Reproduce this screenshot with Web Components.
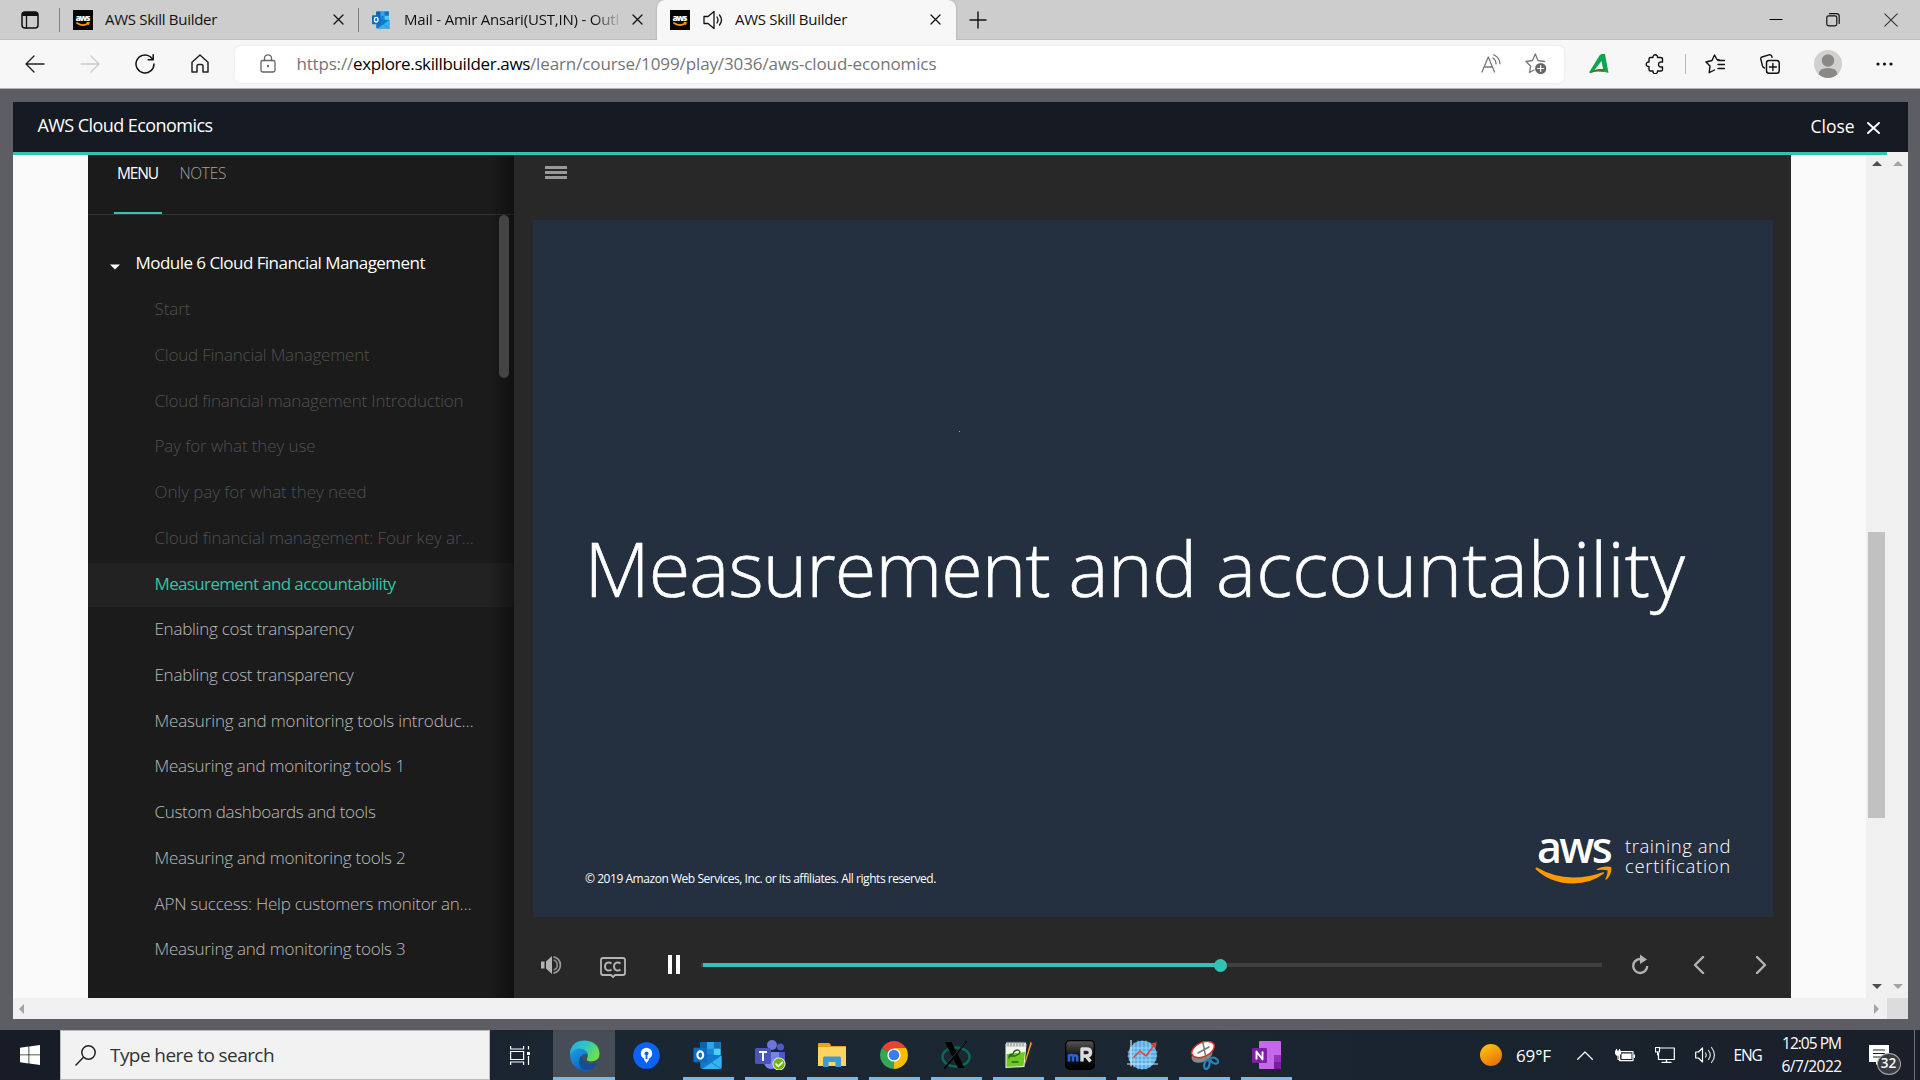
<!DOCTYPE html>
<html lang="en">
<head>
<meta charset="utf-8">
<title>AWS Skill Builder</title>
<style>
html,body{margin:0;padding:0;overflow:hidden;font-family:"Open Sans","Noto Sans",sans-serif}
</style>
</head>
<body>
<desktop-screen></desktop-screen>
<script>
const pending=[];
const make=(name,html)=>customElements.define(name,class extends HTMLElement{
  constructor(){super();this.attachShadow({mode:'open'}).innerHTML=html;}
});

/* Text label whose tracking is tuned to a given width */
customElements.define('fit-text',class extends HTMLElement{
  constructor(){super();this.attachShadow({mode:'open'}).innerHTML='<style>:host{display:inline-block;white-space:pre;flex:none}</style><slot></slot>';}
  connectedCallback(){pending.push(this);}
  fit(){
    const w=+this.getAttribute('w');if(!w)return;
    this.style.letterSpacing='0.001px';
    const n=[...this.textContent].length;
    const d=(w-this.getBoundingClientRect().width)/n;
    this.style.letterSpacing=d.toFixed(3)+'px';
  }
});

const s=(w,h,body,vb)=>`<svg width="${w}" height="${h}" viewBox="${vb||`0 0 ${w} ${h}`}" fill="none" stroke-linecap="round" stroke-linejoin="round">${body}</svg>`;
const outlook=`<path d="M8 1h19a1 1 0 0 1 1 1v13H7V2a1 1 0 0 1 1-1z" fill="#1b87d6"/><path d="M7 1h7v7H7z" fill="#0f62ae"/><path d="M14 1h14v7H14z" fill="#31a5ea"/><path d="M21 1h7v7h-7z" fill="#1d6fb4"/><path d="M21 8h7v7h-7z" fill="#4fd0f8"/><path d="M7 13l22 2v12a2 2 0 0 1-2 2H9a2 2 0 0 1-2-2z" fill="#1278cc"/><path d="M29 15v12a2 2 0 0 1-2 2H9z" fill="#34b4ee"/><path d="M12 18l17 11" stroke="#1a7ecf"/><rect x="0" y="7" width="14" height="15" rx="1" fill="#0d6cc4"/><ellipse cx="7" cy="14.500" rx="3" ry="3.800" stroke="#fff" stroke-width="2.200"/>`;
const ICONS={
 panel:s(18,18,'<rect x="1" y="1" width="16" height="16" rx="3" stroke="#111" stroke-width="1.500"/><path d="M1 5V3q0-2 2-2h12q2 0 2 2v2z" fill="#111"/><path d="M5.500 5v12" stroke="#111" stroke-width="1.300"/>'),
 awsfav:s(20,20,'<rect width="20" height="20" fill="#050505"/><text x="10" y="10.500" text-anchor="middle" font-family="Open Sans" font-weight="800" font-size="8.500" fill="#fff" textLength="15">aws</text><path d="M4 13q6 4 11 .5" stroke="#f90" stroke-width="1.700"/><path d="M14 12.500h2.300l-.6 2" stroke="#f90"/>'),
 outlook20:s(20,18,outlook,'0 0 30 30'),
 outlook:s(30,29,outlook,'0 0 30 30'),
 x11:s(11,11,'<path d="M1 1l9 9M10 1l-9 9" stroke="#111" stroke-width="1.300"/>'),
 sound:s(20,20,'<path d="M1 6.500h4L11 1.500v17L5 13.500H1z" stroke="#111" stroke-width="1.300"/><path d="M14 7q2 3 0 6M16.500 5q4 5 0 10" stroke="#111" stroke-width="1.300"/>'),
 plus:s(18,18,'<path d="M9 1v16M1 9h16" stroke="#111" stroke-width="1.400"/>'),
 min:s(14,14,'<path d="M.5 6.500h13" stroke="#000" stroke-linecap="butt"/>'),
 restore:s(14,14,'<rect x=".8" y="2.800" width="10" height="10" rx="1.800" stroke="#111" stroke-width="1.200"/><path d="M3.500.7h7q2.700 0 2.700 2.700v7" stroke="#111" stroke-width="1.200"/>'),
 wclose:s(14,14,'<path d="M.8.8l12.400 12.400M13.200.8L.8 13.200" stroke="#333" stroke-width="1.100"/>'),
 back:s(20,18,'<path d="M19 9H1M9 1L1 9l8 8" stroke="#222" stroke-width="1.400"/>'),
 fwd:s(20,18,'<path d="M1 9h18M11 1l8 8-8 8" stroke="#ccc" stroke-width="1.400"/>'),
 refresh:s(20,20,'<path d="M19 10a9 9 0 1 1-4-7.500L18 5.500M18.200 .8v5h-5" stroke="#111" stroke-width="1.500"/>'),
 home:s(18,19,'<path d="M1 8.200L9 1l8 7.200V18h-5v-6q0-1.500-1.500-1.500h-3Q6 10.500 6 12v6H1z" stroke="#222" stroke-width="1.500"/>'),
 lock:s(16,19,'<rect x="1" y="6.500" width="14" height="11.500" rx="1.800" stroke="#666" stroke-width="1.300"/><path d="M4.500 6.500V4.300a3.500 3.500 0 0 1 7 0v2.200" stroke="#666" stroke-width="1.300"/><circle cx="8" cy="12" r="1.200" fill="#666"/>'),
 read:s(20,19,'<path d="M1 18L7.300 3 13.500 18M3.300 13h8" stroke="#777" stroke-width="1.300"/><path d="M12 4q3 2 3 6M12.500.8q6 2.500 6.500 9" stroke="#777" stroke-width="1.200"/>'),
 star:s(22,21,'<path d="M19.500 8.500L13 7.500 10.300 1 7.500 7.500 1 8.500l4.700 4.700L4.500 19.500l4.500-2.500" stroke="#777" stroke-width="1.300"/><circle cx="15.700" cy="15.500" r="5.600" fill="#666"/><path d="M15.700 12.500v6M12.700 15.500h6" stroke="#fff" stroke-width="1.200"/>'),
 ga:s(20,21,'<path d="M13 1h3l3.500 19-5-1.500L12.500 8 4 19q-2 1.500-4 .5L10.500 2.500Q11.500 1 13 1z" fill="#11a44f"/><path d="M1 20q3-3.500 9-4l5 0v3q-8-1.500-14 1z" fill="#3f7d1e"/>'),
 puzzle:s(19,20,'<path d="M4 5q0-1.500 1.500-1.500H8a2.300 2.300 0 1 1 4.500 0H15.500Q17.500 3.500 17.500 5v3q-4-.5-4 2.500t4 2.500v2.500q0 1.500-1.500 1.500h-3.500a2.300 2.300 0 1 1-4.500 0H5.500Q4 17 4 15.500v-3a2.300 2.300 0 1 1 0-4.500z" stroke="#111" stroke-width="1.400"/>'),
 favs:s(20,20,'<path d="M15 6.300l-3-.8L9.500 1 7 6.500 1 8l4 4-.8 6.700L9.500 16M13 6.500h6.500M13 10.500h6.500M13 14.500h6.500" stroke="#111" stroke-width="1.400"/>'),
 coll:s(20,20,'<rect x="6.500" y="6.500" width="12.700" height="12.700" rx="2.500" stroke="#111" stroke-width="1.500"/><path d="M12.900 9.500v7M9.400 13h7M4.500 14Q3 13.500 2.500 12L.8 5Q.5 3.500 2 3l7-2.200q2-.3 2.700 1.200l.4 1.400" stroke="#111" stroke-width="1.400"/>'),
 avatar:s(28,28,'<circle cx="14" cy="14" r="14" fill="#d2d0ce"/><circle cx="14" cy="10.500" r="6.200" fill="#8a8886"/><path d="M4.500 24.300Q5.500 18 14 18t9.500 6.300Q19.500 28 14 28t-9.500-3.700z" fill="#8a8886"/>'),
 dots:s(17,4,'<circle cx="2" cy="2" r="1.600" fill="#111"/><circle cx="8.500" cy="2" r="1.600" fill="#111"/><circle cx="15" cy="2" r="1.600" fill="#111"/>'),
 closew:s(13,12,'<path d="M1 1l11 10M12 1L1 11" stroke="#fff" stroke-width="1.900"/>'),
 burger:s(22,13,'<path d="M0 1.500h22M0 6.500h22M0 11.500h22" stroke="#999" stroke-width="3" stroke-linecap="butt"/>'),
 tri:s(10,6,'<path d="M0 .5h10L5 5.500z" fill="#fff"/>'),
 up:s(10,5,'<path d="M5 0l5 5H0z" fill="#505050"/>'), up2:s(10,5,'<path d="M5 0l5 5H0z" fill="#a3a3a3"/>'),
 dn:s(10,5,'<path d="M5 5l5-5H0z" fill="#505050"/>'), dn2:s(10,5,'<path d="M5 5l5-5H0z" fill="#a3a3a3"/>'),
 lt:s(5,10,'<path d="M0 5l5-5v10z" fill="#a3a3a3"/>'), rt:s(5,10,'<path d="M5 5L0 0v10z" fill="#a3a3a3"/>'),
 vol:s(21,18,'<path d="M0 5.500h3.500v7H0zM5 5.500L11 0v18l-6-5.500z" fill="#b4b4b4"/><path d="M12.500.9a8.200 8.200 0 0 1 0 16.200" stroke="#999" stroke-width="1.700" stroke-linecap="butt"/><path d="M12.500 4a5.200 5.200 0 0 1 0 10" stroke="#888" stroke-width="1.700" stroke-linecap="butt"/>'),
 cc:s(26,21,'<path d="M3 1h20q2 0 2 2v13q0 2-2 2h-8l-2 2-2-2H3q-2 0-2-2V3q0-2 2-2z" stroke="#b4b4b4" stroke-width="1.800"/><path d="M11.500 6.500Q9.700 5 7.500 5.600 5 6.500 5 9.500t2.500 3.900q2.200.6 4-.9M20.500 6.500Q18.700 5 16.500 5.600 14 6.500 14 9.500t2.500 3.900q2.200.6 4-.9" stroke="#b4b4b4" stroke-width="1.900" stroke-linecap="butt"/>'),
 pause:s(12,19,'<path d="M0 0h4v19H0zM8 0h4v19H8z" fill="#fff"/>'),
 replay:s(17,21,'<path d="M9.500 5H8a7 7 0 1 0 7.200 7" stroke="#b4b4b4" stroke-width="2.300" stroke-linecap="butt"/><path d="M8 .5l7 5-7 4.500z" fill="#b4b4b4"/>'),
 prev:s(12,18,'<path d="M10 1L2 9l8 8" stroke="#b4b4b4" stroke-width="2.400"/>'),
 next:s(12,18,'<path d="M2 1l8 8-8 8" stroke="#b4b4b4" stroke-width="2.400"/>'),
 smile:s(78,19,'<path d="M.5 2.200Q1 1 2.500 1.800 19 11.500 38 11.500 53 11.500 67 6.500q3.500-1 1.500 1.300Q56 17.500 38 17.500 16 17.500 1 3.500.2 3 .5 2.200z" fill="#f90"/><path d="M62 3q5-3.500 13-2.300 1.500.2 1.500 1.800Q76 9.500 71.500 13.500q-1.500 1-.8-.8 2-5 2-8.200-3.200-1-9.700-.5-2.200.3-1-1z" fill="#f90"/>'),
 win:s(20,20,'<path d="M0 2.800L8.500 1.600v7.900H0zM9.300 1.500L20 0v9.500H9.300zM0 10.300h8.500v8.100L0 17.200zM9.300 10.300H20V20L9.300 18.500z" fill="#fff"/>'),
 search:s(21,21,'<circle cx="13.500" cy="7.500" r="6.700" stroke="#222" stroke-width="1.500"/><path d="M8.500 12.300L1 20" stroke="#222" stroke-width="1.500"/>'),
 task:s(21,19,'<path d="M.6 0v3h13V0M.6 19v-3h13v3M.6 5.500h13v8H.6zM18.500 0v3.500M18.500 10v9" stroke="#fff" stroke-width="1.200" stroke-linecap="butt" stroke-linejoin="miter"/><path d="M17 6h3v3h-3z" fill="#fff"/>'),
 edge:s(31,31,'<defs><linearGradient id="eg" x1="0" y1="0" x2="1" y2=".5"><stop offset="0" stop-color="#25a7e8"/><stop offset=".5" stop-color="#2fc4c9"/><stop offset="1" stop-color="#6be04a"/></linearGradient><linearGradient id="eb" x1="0" y1="0" x2=".5" y2="1"><stop offset="0" stop-color="#1da0df"/><stop offset="1" stop-color="#0a64c4"/></linearGradient></defs><path d="M1 15Q1 1 15.500 .5 29 1 30.500 13q.5 8-8.500 8.500-5 0-4-3 2.500-4-2-7.500Q8 7 1 15z" fill="url(#eg)"/><path d="M1 15Q4 8 11 8.500q7 .5 8 6.500-5-3-7.500 3Q10 27 19 29q2 .5 4 0Q17 33 9 29 1 24 1 15z" fill="url(#eb)"/><path d="M12 15.500Q7 25 14.500 29.500q8 2.500 13.500-5.500.5-1.500-1-.8-6 2-11-1.200Q12.500 19 12 15.500z" fill="#124f94"/>'),
 pin:s(27,27,'<circle cx="13.500" cy="13.500" r="13.300" fill="#0a63f4"/><circle cx="13.500" cy="11.500" r="5.700" fill="#fff"/><circle cx="13.500" cy="11.500" r="2" fill="#0a63f4"/><path d="M11.200 13h4.600v5l-2.300 3-2.300-3z" fill="#fff"/><path d="M12.600 12h1.800v5h-1.800z" fill="#0a63f4"/>'),
 teams:s(31,30,'<circle cx="17" cy="5" r="5" fill="#6d75dc"/><circle cx="25.500" cy="7" r="3.500" fill="#5059c9"/><path d="M21 12h9v10q-1 6-7 5z" fill="#5059c9"/><path d="M9 12h15v11q-1 6-8 6-6-.5-7-6z" fill="#7b83eb"/><rect y="8" width="16" height="16" rx="1.500" fill="#4b53bc"/><path d="M4 12h8M8 12v9" stroke="#fff" stroke-width="2" stroke-linecap="butt"/><circle cx="24" cy="24" r="6.500" fill="#fff"/><circle cx="24" cy="24" r="5.700" fill="#6bb700"/><path d="M21 24l2.300 2.300 4-4" stroke="#fff" stroke-width="1.700"/>'),
 folder:s(28,25,'<path d="M0 1q0-1 1-1h10q1.500 0 2 3H28v19q0 1-1 1H1q-1 0-1-1z" fill="#e8a41c"/><path d="M0 4h27q1 0 1 1v18H0z" fill="#fcd462"/><path d="M5 24v-9q0-1.500 1.500-1.500h15Q23 13.500 23 15v9h-5.500v-4.500q0-.5-.8-.5h-5.500q-.7 0-.7.500V24z" fill="#3d9ad6"/>'),
 chrome:s(28,28,'<path d="M14 14L1.900 7A14 14 0 0 1 26.100 7z" fill="#ea4335"/><path d="M14 14L26.100 7A14 14 0 0 1 14 28z" fill="#fbbc05"/><path d="M14 14L14 28A14 14 0 0 1 1.900 7z" fill="#34a853"/><path d="M14 7h12.100L19 18l-5 10 4-12z" fill="#fbbc05"/><circle cx="14" cy="14" r="6.600" fill="#fff"/><circle cx="14" cy="14" r="5.300" fill="#3b7ded"/>'),
 xq:s(32,28,'<ellipse cx="16" cy="16" rx="13.500" ry="9.500" stroke="#0c6b4e" stroke-width="2.500"/><path d="M5 1h6.500l13 26H18z" fill="#000"/><path d="M26 1L5 27" stroke="#000" stroke-width="1.800"/><path d="M25 2L9 20" stroke="#4a5960" stroke-width=".6"/>'),
 note:s(29,28,'<path d="M1.500 3h21l-2 23-19 1z" fill="#f1f5ea"/><path d="M2.500 13l18.500-2-1.500 14L2.500 26z" fill="#6fca20"/><path d="M2 6V1.500h20V6" fill="#ddd"/><path d="M4 1v4M7 1v4M10 1v4M13 1v4M16 1v4M19 1v4" stroke="#888"/><path d="M5 17q0-4 4-4 1-4 5-4 3 1 1 4l-4 2H5M8 21h6" stroke="#296219" stroke-width="1.300"/><path d="M28 2l-6.500 20-1 3 .2-4L26.500 1z" fill="#f0a317"/><path d="M26.500 1l1.500 1" stroke="#c33"/>'),
 mr:s(30,30,'<defs><linearGradient id="mg" x2="0" y2="1"><stop stop-color="#555"/><stop offset=".5" stop-color="#161616"/><stop offset="1" stop-color="#000"/></linearGradient></defs><rect x=".7" y=".7" width="28.600" height="28.600" rx="4" fill="url(#mg)" stroke="#000" stroke-width="1.300"/><path d="M4 21.500v-7M4 15.500q3.500-1.500 4 1v5M8 16.500q3.500-2.500 4.200.3v4.700" stroke="#2465df" stroke-width="2.600" stroke-linecap="butt"/><path d="M17 21.500V9h4.500q4 0 4 3.500t-4 3.500H17M21 16l4.500 5.500" stroke="#ddd" stroke-width="3.400" stroke-linecap="butt"/>'),
 graph:s(31,30,'<circle cx="15.500" cy="15" r="14.300" fill="#58aee5"/><path d="M3 8h25M1 12h29M1 16h29M2 20h27M7 3v24M11 1v28M15 1v28M19 1v28M23 3v24" stroke="#b9e4fa" stroke-width=".7"/><path d="M4 0v26M0 24h31" stroke="#d7e9f3" stroke-width="1.200"/><path d="M7 17l6-6 6 5 9-12M25 4l4-1-1 4" stroke="#e04038" stroke-width="1.500"/>'),
 snip:s(29,29,'<ellipse cx="12" cy="14" rx="11" ry="7" transform="rotate(-25 12 14)" fill="#888"/><ellipse cx="13" cy="8.500" rx="12" ry="7" transform="rotate(-25 13 8.500)" fill="#fff" stroke="#d73026" stroke-width="1.500"/><path d="M13 2l3 15M19 6L8 12" stroke="#777" stroke-width="1.500"/><ellipse cx="17" cy="23.500" rx="2.500" ry="4.500" transform="rotate(15 17 23)" stroke="#2583bd" stroke-width="2.200"/><ellipse cx="24" cy="19.500" rx="4.200" ry="2.600" transform="rotate(30 24 20)" stroke="#2583bd" stroke-width="2.200"/>'),
 onenote:s(29,28,'<path d="M8 0h20q1 0 1 1v26q0 1-1 1H8q-1 0-1-1V1q0-1 1-1z" fill="#c568ea"/><path d="M22 14h7v7h-7z" fill="#9333be"/><path d="M22 21h7v6q0 1-1 1h-6z" fill="#761fa1"/><rect y="7" width="15" height="15" rx="1" fill="#7c20a5"/><path d="M4.500 18.500v-8l6 8v-8" stroke="#fff" stroke-width="1.900" stroke-linecap="butt"/>'),
 sun:s(22,22,'<defs><linearGradient id="sg" x1=".2" x2=".8" y2="1"><stop stop-color="#fdc708"/><stop offset="1" stop-color="#e9690c"/></linearGradient></defs><circle cx="11" cy="11" r="11" fill="url(#sg)"/>'),
 chev:s(16,9,'<path d="M.7 8.300L8 1l7.300 7.300" stroke="#fff" stroke-width="1.300"/>'),
 bat:s(20,13,'<rect x="4.500" y="2.600" width="13.500" height="9" stroke="#fff" stroke-width="1.200"/><path d="M6.500 4.500h10v5.500h-10zM18.500 5.500H20v3.500h-1.500z" fill="#fff"/><path d="M0 1.500h6v3q-1 2.500-3 2.500T0 4.500z" fill="#fff"/><path d="M1.500 0v2M4.500 0v2M3 7v3.500h2" stroke="#fff" stroke-width="1.100"/>'),
 net:s(20,16,'<path d="M5 1h14.300v11.500H3.500V6M11.500 12.500V15M7 15.400h9" stroke="#fff" stroke-width="1.200"/><path d="M.5.500h4v4.500h-4z" stroke="#fff" stroke-width="1.200"/><path d="M2.500 5v3" stroke="#fff"/>'),
 spk:s(21,18,'<path d="M.7 6h2.800l4-4v14l-4-4H.7z" stroke="#fff" stroke-width="1.200"/><path d="M10.500 7q1.500 2 0 4M13.500 4.500q3.500 4.500 0 9M16.500 1.500q6 7.500 0 15" stroke="#ddd" stroke-width="1.200"/>'),
 notif:s(20,20,'<path d="M0 0h20v17H10l-3 3v-3H0z" fill="#fff"/><path d="M4 5h12M4 8.500h12M4 12h8" stroke="#19212b" stroke-width="1.200" stroke-linecap="butt"/>')
};
customElements.define('ui-icon',class extends HTMLElement{
  constructor(){super();this.attachShadow({mode:'open'});}
  connectedCallback(){this.shadowRoot.innerHTML='<style>:host{display:block;flex:none}svg{display:block}</style>'+(ICONS[this.getAttribute('name')]||'');}
});
const I=(n,ml=0,extra='')=>`<ui-icon name="${n}" style="margin-left:${ml}px;${extra}"></ui-icon>`;
const T=(t,w,ml=0,extra='')=>`<fit-text w="${w}" style="margin-left:${ml}px;${extra}">${t}</fit-text>`;

make('browser-tabs',`<style>
:host{display:flex;height:40px;background:#cdcdcd;font-size:15px;color:#111;box-sizing:border-box}
.t,.w{display:flex;align-items:center;height:40px;flex:none;box-sizing:border-box}
.t{border-bottom:1px solid #bbb}
.sep{width:1px;height:24px;background:#808080}
.fade{width:215px;overflow:hidden;-webkit-mask:linear-gradient(90deg,#000 88%,#0002);mask:linear-gradient(90deg,#000 88%,#0002)}
.active{width:299px;background:#f7f7f7;border-bottom-color:#f7f7f7;border-radius:8px 8px 0 0;box-shadow:0 0 2px #999}
.w{flex:1;border-bottom:1px solid #bbb}
fit-text{padding-bottom:1px}
</style>
<div class="t" style="width:59px">${I('panel',21)}</div>
<div class="t" style="width:299px"><i class="sep"></i>${I('awsfav',13)}${T('AWS Skill Builder',112,12)}${I('x11',116)}</div>
<div class="t" style="width:299px"><i class="sep"></i>${I('outlook20',12)}<div class="fade" style="margin-left:13px">${T('Mail - Amir Ansari(UST,IN) - Outl',215)}</div>${I('x11',12.500)}</div>
<div class="t active">${I('awsfav',13)}${I('sound',13)}${T('AWS Skill Builder',112,12)}${I('x11',83)}</div>
<div class="w">${I('plus',13)}${I('min',782)}${I('restore',43)}${I('wclose',44)}</div>`);

make('browser-toolbar',`<style>
:host{display:flex;align-items:center;height:49px;background:#f7f7f7;border-bottom:1px solid #b4b4b4;box-sizing:border-box;font-size:17px}
.url{display:flex;align-items:center;width:1329px;height:37px;background:#fff;border-radius:6px;margin-left:26px;color:#757575;box-shadow:0 0 3px #e2e2e2;flex:none}
.url fit-text{padding-bottom:2px}
ui-icon{margin-top:-1px}
.s{width:1.500px;height:20px;background:#b8b8b8;margin-left:21px;flex:none}
</style>
${I('back',25)}${I('fwd',35)}${I('refresh',35)}${I('home',36)}
<div class="url">${I('lock',25)}${T('https://',56.500,20.500)}${T('explore.skillbuilder.aws',177,0,'color:#000')}${T('/learn/course/1099/play/3036/aws-cloud-economics',406.500)}${I('read',545)}${I('star',24)}</div>
${I('ga',25)}${I('puzzle',35.500)}<i class="s"></i>${I('favs',18.500)}${I('coll',35)}${I('avatar',34)}${I('dots',34.500)}`);

make('course-header',`<style>
:host{display:flex;align-items:center;height:50px;background:#161a22;color:#fff;font-size:18px;box-sizing:border-box;padding:0 28.500px 4px 24.500px;flex:none}
.sp{flex:1}
</style><slot></slot><span class="sp"></span>${T('Close',44,0,'padding-top:1px;font-size:17.500px')}${I('closew',12,'margin-top:5px')}`);

customElements.define('menu-item',class extends HTMLElement{
  constructor(){super();this.attachShadow({mode:'open'}).innerHTML=`<style>
  :host{display:flex;align-items:center;height:45.740px;padding:0 0 4.600px 66.500px;box-sizing:border-box;color:#bcbcbc;font-weight:350}
  :host([seen]){color:#505050}
  :host([on]){padding-bottom:3.600px;color:#33c3a5;background:linear-gradient(#222,#222) 0 50%/100% 44px no-repeat;font-weight:400}
  </style><slot></slot>`;}
});
const items=[['Start',36,1],['Cloud Financial Management',215,1],['Cloud financial management Introduction',309,1],['Pay for what they use',161,1],['Only pay for what they need',212,1],['Cloud financial management: Four key ar…',319,1],['Measurement and accountability',241,2],['Enabling cost transparency',199],['Enabling cost transparency',199],['Measuring and monitoring tools introduc…',319],['Measuring and monitoring tools 1',250.500],['Custom dashboards and tools',221],['Measuring and monitoring tools 2',251],['APN success: Help customers monitor an…',317],['Measuring and monitoring tools 3',251]];
make('course-menu',`<style>
:host{display:flex;flex-direction:column;width:426px;background:#1b1b1b;position:relative;font-size:17px;flex:none;overflow:hidden}
.tabs{display:flex;height:60px;border-bottom:1px solid #353535;box-sizing:border-box;padding-left:26px;font-size:15.500px;color:#a2a2a2;font-weight:350;flex:none}
.tabs div{box-sizing:border-box;height:59px;line-height:36px}
.on{width:48px;color:#fff;font-weight:400;border-bottom:2px solid #33c3b5;padding-left:3px}
.mod{display:flex;align-items:center;height:73px;box-sizing:border-box;padding:25px 0 0 22px;color:#fff;flex:none}
.list{display:flex;flex-direction:column}
.shade{position:absolute;right:0;top:0;bottom:0;width:26px;background:linear-gradient(90deg,transparent,#0006)}
.thumb{position:absolute;left:411px;top:60px;width:10px;height:163px;border-radius:5px;background:#444}
</style>
<div class="tabs"><div class="on">${T('MENU',41)}</div><div>${T('NOTES',46.500,17.500)}</div></div>
<div class="mod">${I('tri',0,'margin-top:5px')}${T('Module 6 Cloud Financial Management',289.500,15.500,'padding-bottom:4px')}</div>
<div class="list">${items.map(([t,w,k])=>`<menu-item${k==1?' seen':k==2?' on':''}>${T(t,w)}</menu-item>`).join('')}</div>
<div class="shade"></div><div class="thumb"></div>`);

make('course-slide',`<style>
:host{display:flex;flex-direction:column;width:1240px;height:697px;background:#242f3f;color:#fff;margin-left:19px;flex:none}
.h{height:104px;padding:295.500px 0 0 51.500px;font-size:75.500px;line-height:104px;font-weight:300;flex:1;white-space:nowrap;-webkit-text-stroke:.6px #fff}
.dot{width:1px;height:1px;background:#9aa;position:absolute;left:959px;top:431px}
.f{display:flex;justify-content:space-between;padding:0 41.500px 0 52px;height:81.500px}
.c{font-size:12px;line-height:16px;padding-top:35px}
.logo{display:flex;gap:12px}
.mark{width:78px;display:flex;flex-direction:column;font-size:43px;font-weight:600}
.word{height:32px;line-height:26px;padding-left:2px;margin-top:-1.500px;white-space:pre;letter-spacing:-2.600px}
.n{display:flex;flex-direction:column;align-items:flex-start;width:106.500px;font-size:18.500px;font-weight:350;line-height:20px}
</style>
<i class="dot"></i>
<div class="h">${T('Measurement ',484)}${T('and ',147.500)}${T('accountability',469)}</div>
<div class="f"><div class="c">${T('© 2019 Amazon Web Services, Inc. or its affiliates. All rights reserved.',351)}</div>
<div class="logo"><div class="mark"><div class="word">aws</div>${I('smile')}</div><div class="n">${T('training and',106)}${T('certification',106)}</div></div></div>`);

make('player-controls',`<style>
:host{display:flex;align-items:center;height:81px;padding-top:15px;box-sizing:border-box}
.bar{width:901px;height:4px;margin-left:21px;background:#3f3f3f;display:flex;align-items:center;flex:none}
.fill{width:517px;margin-left:2px;height:4px;background:#33c3b5}
.knob{width:13px;height:13px;border-radius:50%;background:#33c3b5;margin-left:-6px}
</style>
${I('vol',27)}${I('cc',38,'margin-top:4px')}${I('pause',42,'margin-top:-1px')}<div class="bar"><div class="fill"></div><div class="knob"></div></div>${I('replay',30,'margin-top:-1px')}${I('prev',44)}${I('next',49.500)}`);

make('course-stage',`<style>
:host{display:flex;flex-direction:column;width:1277px;background:#282828;flex:none}
.top{height:65px;padding:11px 0 0 31px;box-sizing:border-box}
</style><div class="top">${I('burger')}</div><course-slide></course-slide><player-controls></player-controls>`);

make('scroll-bar',`<style>
:host{display:flex;flex-direction:column;align-items:center;justify-content:space-between;background:#f0f0f0;width:21px;box-sizing:border-box;padding:6px 0 9px;flex:none}
:host([outer]){padding-top:9px}
:host([h]){flex-direction:row;width:1874px;height:21px;padding:0 8px 0 6px}
</style><slot></slot>`);

make('course-page',`<style>
:host{display:flex;flex-direction:column;height:941px;background:#5d5e63;padding:13px 12px 11px 13px;box-sizing:border-box}
.row,.in,.bot{display:flex;flex:none}
.row{height:846px}.in{height:843px;background:#fafafa}
.main{width:1874px}.line{height:3px;background:#33c3b5}
.gap{width:75px;flex:none}.bot{background:#dcdcdc}
.thumb{width:17px;height:286px;background:#c1c1c1;margin-top:199px}
</style>
<course-header>${T('AWS Cloud Economics',175,0,'margin-top:-1px')}</course-header>
<div class="row"><div class="main"><div class="line"></div>
<div class="in"><div class="gap"></div><course-menu></course-menu><course-stage></course-stage><div class="gap"></div>
<scroll-bar>${I('up')}<div class="thumb"></div>${I('dn')}</scroll-bar></div></div>
<scroll-bar outer>${I('up2')}${I('dn2')}</scroll-bar></div>
<div class="bot"><scroll-bar h>${I('lt')}${I('rt')}</scroll-bar></div>`);

const apps=['outlook','teams','folder','chrome','xq','note','mr','graph','snip','onenote'];
make('task-bar',`<style>
:host{display:flex;align-items:center;height:50px;background:linear-gradient(90deg,#171c26,#1a2632 30%,#1b2733 55%,#19232e 80%,#1a1f29);color:#fff;font-size:16px}
.search{display:flex;align-items:center;width:430px;height:50px;margin-left:20px;background:#f2f2f2;border:1px solid #bbb;box-sizing:border-box;color:#333;font-size:19px;flex:none}
.app{width:62px;height:50px;display:flex;align-items:center;justify-content:center;box-sizing:border-box;flex:none}
.run{background:linear-gradient(#76b9ed,#76b9ed) 50% 100%/51px 3px no-repeat}
.cur{background:linear-gradient(#76b9ed,#76b9ed) 0 100%/100% 3px no-repeat #464d56}
.clock{display:flex;flex-direction:column;align-items:center;line-height:23px;width:60px;margin-left:20px;flex:none;font-size:15.500px}
.nt{display:flex;position:relative;margin-left:27px;width:46px}
.badge{position:absolute;left:8px;top:7.500px;width:22px;height:20px;line-height:19px;border:1px solid #aaa;border-radius:50%;background:#3a3d42;font-size:13.500px;font-weight:600;text-align:center}
.end{width:1px;height:50px;background:#69717a;margin-left:-1px;flex:none}
</style>
${I('win',20)}
<div class="search">${I('search',14)}${T('Type here to search',164,14)}</div>
${I('task',20)}
<div class="app cur" style="margin-left:22px">${I('edge')}</div><div class="app">${I('pin')}</div>
${apps.map(a=>`<div class="app run">${I(a)}</div>`).join('')}
${I('sun',183)}${T('69°F',35,14,'font-size:17px')}${I('chev',26)}${I('bat',22)}${I('net',20)}${I('spk',20)}${T('ENG',28,17.500,'font-size:15.500px')}
<div class="clock">${T('12:05 PM',59)}${T('6/7/2022',60)}</div>
<div class="nt">${I('notif')}<span class="badge">32</span></div><i class="end"></i>`);

make('desktop-screen',`<style>:host{display:flex;flex-direction:column;width:1920px;height:1080px;overflow:hidden;position:relative}</style>
<browser-tabs></browser-tabs><browser-toolbar></browser-toolbar><course-page></course-page><task-bar></task-bar>`);

pending.forEach(e=>e.fit());
</script>
</body>
</html>
